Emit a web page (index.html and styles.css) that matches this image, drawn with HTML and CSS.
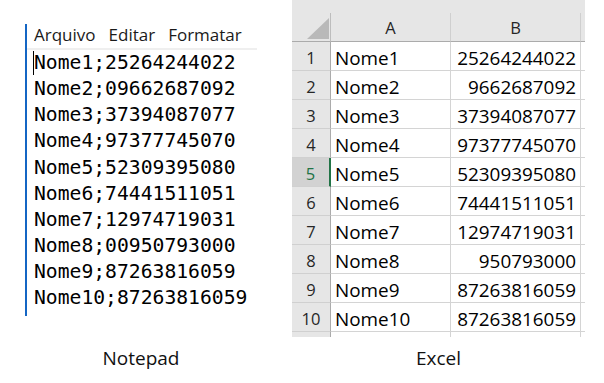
FILE: index.html
```html
<!DOCTYPE html>
<html lang="pt">
<head>
    <meta charset="UTF-8">
    <title>Notepad x Excel</title>
    <link rel="stylesheet" href="styles.css">
</head>
<body>

<div class="page">

    <!-- Notepad -->
    <div class="fig fig-notepad">
        <div class="notepad">
            <div class="menu">
                <span>Arquivo</span>
                <span>Editar</span>
                <span>Formatar</span>
            </div>
            <div class="text">
                <div class="line"><span class="caret"></span>Nome1;25264244022</div>
                <div class="line">Nome2;09662687092</div>
                <div class="line">Nome3;37394087077</div>
                <div class="line">Nome4;97377745070</div>
                <div class="line">Nome5;52309395080</div>
                <div class="line">Nome6;74441511051</div>
                <div class="line">Nome7;12974719031</div>
                <div class="line">Nome8;00950793000</div>
                <div class="line">Nome9;87263816059</div>
                <div class="line">Nome10;87263816059</div>
            </div>
        </div>
        <div class="caption">Notepad</div>
    </div>

    <!-- Excel -->
    <div class="fig fig-excel">
        <div class="sheet">
            <div class="grid">
                <div class="corner">
                    <svg width="22" height="21" viewBox="0 0 22 21">
                        <polygon points="22,0 22,21 0,21" fill="#b9b9b9"/>
                    </svg>
                </div>
                <div class="col-head">A</div>
                <div class="col-head">B</div>
                <div class="head-fill"></div>

                <div class="row-head">1</div><div class="cell">Nome1</div><div class="cell num">25264244022</div><div class="fill"></div>
                <div class="row-head">2</div><div class="cell">Nome2</div><div class="cell num">9662687092</div><div class="fill"></div>
                <div class="row-head">3</div><div class="cell">Nome3</div><div class="cell num">37394087077</div><div class="fill"></div>
                <div class="row-head">4</div><div class="cell">Nome4</div><div class="cell num">97377745070</div><div class="fill"></div>
                <div class="row-head active">5</div><div class="cell">Nome5</div><div class="cell num">52309395080</div><div class="fill"></div>
                <div class="row-head">6</div><div class="cell">Nome6</div><div class="cell num">74441511051</div><div class="fill"></div>
                <div class="row-head">7</div><div class="cell">Nome7</div><div class="cell num">12974719031</div><div class="fill"></div>
                <div class="row-head">8</div><div class="cell">Nome8</div><div class="cell num">950793000</div><div class="fill"></div>
                <div class="row-head">9</div><div class="cell">Nome9</div><div class="cell num">87263816059</div><div class="fill"></div>
                <div class="row-head">10</div><div class="cell">Nome10</div><div class="cell num">87263816059</div><div class="fill"></div>

                <!-- partly visible row 11 -->
                <div class="row-head"></div><div class="cell"></div><div class="cell"></div><div class="fill"></div>
            </div>
        </div>
        <div class="caption">Excel</div>
    </div>

</div>

</body>
</html>
```

FILE: styles.css
```css
body {
    margin: 0;
    background-color: #fff;
    color: #000;
    font-family: "Open Sans", "Noto Sans", sans-serif;
}
.page {
    display: flex;
    width: 604px;
    height: 383px;
    overflow: hidden;
}
.caption {
    font-size: 19px;
    line-height: 24px;
    text-align: center;
    color: #111;
}

/* Notepad */
.fig-notepad {
    width: 292px;
    padding: 24px 0 0 25px;
    box-sizing: border-box;
}
.notepad {
    width: 232px;
    height: 292px;
    border-left: 2px solid #1466c4;
    box-sizing: border-box;
}
.menu {
    display: flex;
    gap: 13px;
    height: 26px;
    padding-left: 7px;
    box-sizing: border-box;
    border-bottom: 2px solid #efefef;
    font-size: 17px;
    line-height: 22px;
    color: #1a1a1a;
}
.text {
    padding-left: 7px;
    font-family: "DejaVu Sans Mono", monospace;
    font-size: 19.7px;
    line-height: 26.14px;
}
.line {
    white-space: pre;
}
.caret {
    display: inline-block;
    width: 1px;
    height: 24px;
    margin-left: -1px;
    background-color: #000;
    vertical-align: -6px;
}
.fig-notepad .caption {
    width: 232px;
    margin-top: 30px;
}

/* Excel */
.fig-excel {
    width: 312px;
}
.sheet {
    width: 293px;
    height: 337px;
    padding-top: 13px;
    box-sizing: border-box;
    background-color: #e6e6e6;
    overflow: hidden;
}
.grid {
    display: grid;
    grid-template-columns: 39px 120px 130px 4px;
    grid-auto-rows: 29px;
}
.grid > div {
    box-sizing: border-box;
}
.corner {
    display: flex;
    justify-content: flex-end;
    align-items: flex-end;
    padding: 0 1px 2px 0;
    border-right: 1px solid #bdbdbd;
    border-bottom: 1px solid #ababab;
}
.corner svg {
    display: block;
}
.col-head {
    text-align: center;
    font-size: 16.5px;
    line-height: 28px;
    padding-top: 1px;
    color: #262626;
    border-right: 1px solid #cfcfcf;
    border-bottom: 1px solid #ababab;
}
.head-fill {
    border-bottom: 1px solid #ababab;
}
.row-head {
    text-align: center;
    font-size: 16.5px;
    line-height: 28px;
    padding-top: 2px;
    color: #262626;
    border-right: 1px solid #ababab;
    border-bottom: 1px solid #d0d0d0;
}
.row-head.active {
    background-color: #d2d2d2;
    color: #217346;
    border-right: 2px solid #217346;
}
.cell {
    background-color: #fff;
    font-size: 18.9px;
    line-height: 28px;
    padding: 2px 4px 0 4px;
    white-space: nowrap;
    border-right: 1px solid #d4d4d4;
    border-bottom: 1px solid #d4d4d4;
}
.cell.num {
    text-align: right;
}
.fill {
    background-color: #fff;
    border-bottom: 1px solid #d4d4d4;
}
.fig-excel .caption {
    width: 293px;
    margin-top: 9px;
}
```
